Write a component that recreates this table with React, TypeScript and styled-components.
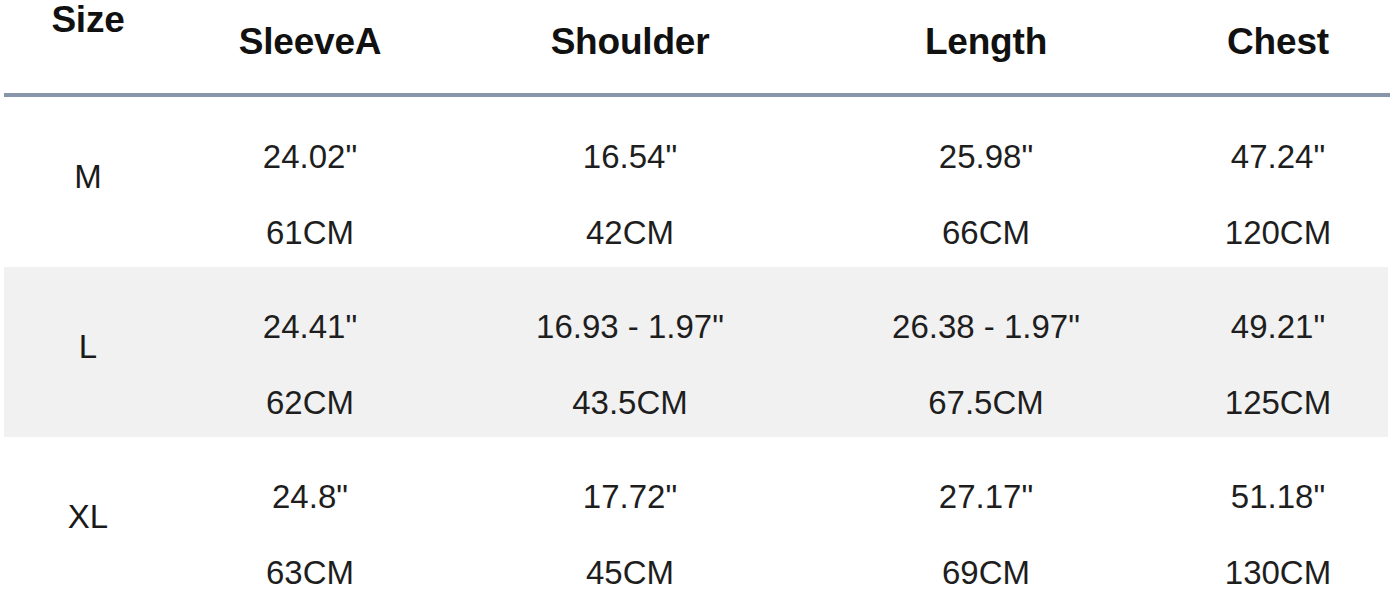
import styled, { createGlobalStyle } from 'styled-components';

type SizeRow = {
  size: string;
  inches: string[];
  cm: string[];
  shaded?: boolean;
};

const columns = ['SleeveA', 'Shoulder', 'Length', 'Chest'];

const rows: SizeRow[] = [
  {
    size: 'M',
    inches: ['24.02"', '16.54"', '25.98"', '47.24"'],
    cm: ['61CM', '42CM', '66CM', '120CM'],
  },
  {
    size: 'L',
    inches: ['24.41"', '16.93 - 1.97"', '26.38 - 1.97"', '49.21"'],
    cm: ['62CM', '43.5CM', '67.5CM', '125CM'],
    shaded: true,
  },
  {
    size: 'XL',
    inches: ['24.8"', '17.72"', '27.17"', '51.18"'],
    cm: ['63CM', '45CM', '69CM', '130CM'],
  },
];

const GlobalStyle = createGlobalStyle`
  html, body {
    margin: 0;
    padding: 0;
    background: #ffffff;
    overflow: hidden;
  }
  body {
    font-family: "Liberation Sans", Arial, Helvetica, sans-serif;
    color: #1a1a1a;
  }
`;

const Table = styled.div`
  width: 1386px;
  margin-left: 4px;
`;

// the last column runs a few px past the rule line, as in the source chart
const Grid = styled.div`
  display: grid;
  grid-template-columns: 168px 276px 364px 348px 236px;
`;

const HeaderRow = styled(Grid)`
  height: 93px;
  border-bottom: 4px solid #8796a8;
`;

const HeaderCell = styled.div<{ $top: number }>`
  padding-top: ${(p) => p.$top}px;
  text-align: center;
  font-size: 37px;
  font-weight: 700;
  line-height: 1;
  color: #111111;
  letter-spacing: -0.2px;
`;

const BodyRow = styled(Grid)<{ $shaded?: boolean }>`
  height: 170px;
  background: ${(p) => (p.$shaded ? '#f1f1f1' : 'transparent')};
  margin-right: ${(p) => (p.$shaded ? '2px' : '0')};
`;

const SizeLabel = styled.div`
  padding-top: 65px;
  text-align: center;
  font-size: 33px;
  line-height: 30px;
  color: #1a1a1a;
`;

const ValueCell = styled.div`
  padding-top: 45px;
  display: flex;
  flex-direction: column;
  align-items: center;
  gap: 46px;
`;

const Value = styled.span`
  display: block;
  font-size: 33px;
  line-height: 30px;
  color: #1e1e1e;
  white-space: nowrap;
`;

export default function App() {
  return (
    <>
      <GlobalStyle />
      <Table>
        <HeaderRow>
          <HeaderCell $top={1}>Size</HeaderCell>
          {columns.map((c) => (
            <HeaderCell key={c} $top={23}>
              {c}
            </HeaderCell>
          ))}
        </HeaderRow>

        {rows.map((row) => (
          <BodyRow key={row.size} $shaded={row.shaded}>
            <SizeLabel>{row.size}</SizeLabel>
            {row.inches.map((inch, i) => (
              <ValueCell key={i}>
                <Value>{inch}</Value>
                <Value>{row.cm[i]}</Value>
              </ValueCell>
            ))}
          </BodyRow>
        ))}
      </Table>
    </>
  );
}
